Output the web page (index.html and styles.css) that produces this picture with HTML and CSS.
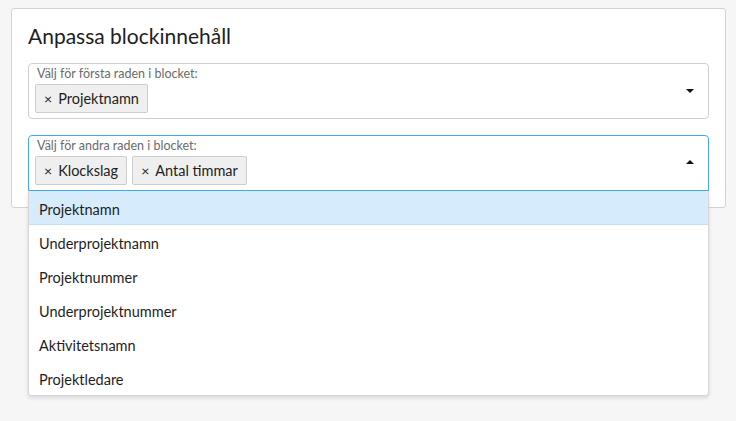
FILE: index.html
```html
<!DOCTYPE html>
<html>
<head>
<meta charset="utf-8">
<link rel="stylesheet" href="styles.css">
</head>
<body>
<div class="card">
  <h2 class="title">Anpassa blockinnehåll</h2>
  <div class="select">
    <div class="label">Välj för första raden i blocket:</div>
    <div class="chips">
      <span class="chip"><span class="x">×</span>Projektnamn</span>
    </div>
    <span class="caret down"></span>
  </div>
  <div class="select-wrap">
    <div class="select open">
      <div class="label">Välj för andra raden i blocket:</div>
      <div class="chips">
        <span class="chip"><span class="x">×</span>Klockslag</span>
        <span class="chip"><span class="x">×</span>Antal timmar</span>
      </div>
      <span class="caret up"></span>
    </div>
    <ul class="menu">
      <li class="item active">Projektnamn</li>
      <li class="item">Underprojektnamn</li>
      <li class="item">Projektnummer</li>
      <li class="item">Underprojektnummer</li>
      <li class="item">Aktivitetsnamn</li>
      <li class="item">Projektledare</li>
    </ul>
  </div>
</div>
</body>
</html>
```
FILE: styles.css
```css
html, body { margin: 0; padding: 0; }
body {
  background: #f6f6f6;
  font-family: Lato, "Open Sans", sans-serif;
  color: #222;
  padding: 8px 10px 0 11px;
  height: 421px;
  box-sizing: border-box;
  overflow: hidden;
}
.card {
  width: 715px;
  box-sizing: border-box;
  background: #fff;
  border: 1px solid #d4d4d4;
  border-radius: 3px;
  padding: 14px 16px 16px 16px;
}
.title {
  margin: 0 0 14px 0;
  font-weight: 400;
  font-size: 21px;
  line-height: 26px;
  color: #1e1e1e;
}
.select {
  position: relative;
  border: 1px solid #cfcfcf;
  border-radius: 4px;
  height: 56px;
  box-sizing: border-box;
  padding: 2px 6px 0 6px;
}
.select.open { border-color: #45a6f0; border-radius: 4px 4px 0 0; }
.select-wrap { position: relative; margin-top: 16px; }
.label {
  font-size: 12.5px;
  line-height: 15px;
  color: #6b6b6b;
  padding-left: 2px;
}
.chips { display: flex; gap: 5px; margin-top: 3px; }
.chip {
  display: inline-flex;
  align-items: center;
  height: 29px;
  box-sizing: border-box;
  background: #efefef;
  border: 1px solid #cdcdcd;
  border-radius: 2px;
  padding: 0 8px 0 8px;
  font-size: 14.5px;
  color: #1e1e1e;
}
.chip .x { font-size: 14px; margin-right: 6px; }
.caret {
  position: absolute;
  right: 14px;
  width: 0; height: 0;
  border-left: 4px solid transparent;
  border-right: 4px solid transparent;
}
.caret.down { top: 25px; border-top: 4px solid #111; }
.caret.up { top: 24px; border-bottom: 4px solid #111; }
.menu {
  position: absolute;
  left: 0; right: 0;
  top: 56px;
  margin: 0;
  padding: 0;
  list-style: none;
  background: #fff;
  border: 1px solid #d6d6d6;
  border-top: none;
  border-radius: 0 0 3px 3px;
  box-shadow: 0 2px 4px rgba(0,0,0,0.12);
}
.item {
  height: 34px;
  box-sizing: border-box;
  padding: 10px 0 0 10px;
  line-height: 17px;
  font-size: 14.5px;
  color: #1e1e1e;
}
.item.active { background: #d6ebfc; border-bottom: 1px solid #c3def5; }
```
